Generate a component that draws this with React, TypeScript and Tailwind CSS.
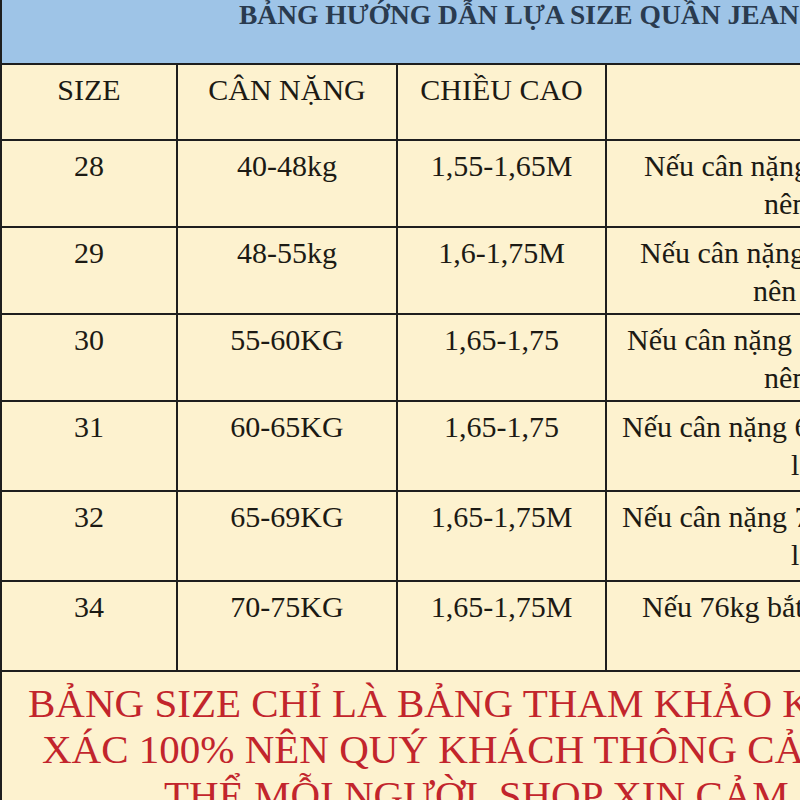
const rows = [
  { size: '28', weight: '40-48kg', height: '1,55-1,65M', h: 'h-[87px]', note: [{ t: 'Nếu cân nặng 48kg', pl: 'pl-[37px]' }, { t: 'nên lấy size 29', pl: 'pl-[157px]' }] },
  { size: '29', weight: '48-55kg', height: '1,6-1,75M', h: 'h-[87px]', note: [{ t: 'Nếu cân nặng 55kg', pl: 'pl-[33px]' }, { t: 'nên lấy size 30', pl: 'pl-[146px]' }] },
  { size: '30', weight: '55-60KG', height: '1,65-1,75', h: 'h-[87px]', note: [{ t: 'Nếu cân nặng  60kg', pl: 'pl-[20px]' }, { t: 'nên lấy size 31', pl: 'pl-[157px]' }] },
  { size: '31', weight: '60-65KG', height: '1,65-1,75', h: 'h-[90px]', note: [{ t: 'Nếu cân nặng 65kg', pl: 'pl-[15px]' }, { t: 'là size 32', pl: 'pl-[184px]' }] },
  { size: '32', weight: '65-69KG', height: '1,65-1,75M', h: 'h-[90px]', note: [{ t: 'Nếu cân nặng 70kg', pl: 'pl-[15px]' }, { t: 'là size 34', pl: 'pl-[184px]' }] },
  { size: '34', weight: '70-75KG', height: '1,65-1,75M', h: 'h-[90px]', note: [{ t: 'Nếu 76kg bắt buộc size 36', pl: 'pl-[35px]' }] },
];

const serif = { fontFamily: '"Liberation Serif", "Times New Roman", serif' };

export default function App() {
  return (
    <div className="w-[800px] h-[800px] overflow-hidden bg-[#fdf2cf]" style={serif}>
      <div className="w-[1100px] border-l-2 border-[#1e1e1e] text-[#1c1a14]">
        {/* Title band */}
        <div className="h-[65px] bg-[#9ec4e7] border-b-2 border-[#1e1e1e]">
          <div className="pl-[237px] text-[27.5px] leading-[30px] font-bold text-[#2a3b4f] whitespace-nowrap">
            BẢNG HƯỚNG DẪN LỰA SIZE QUẦN JEAN
          </div>
        </div>

        {/* Header row */}
        <div className="flex h-[76px] border-b-2 border-[#1e1e1e] text-[30px] leading-[38px]">
          <div className="w-[176px] border-r-2 border-[#1e1e1e] pt-[6px] text-center">SIZE</div>
          <div className="w-[220px] border-r-2 border-[#1e1e1e] pt-[6px] text-center">CÂN NẶNG</div>
          <div className="w-[209px] border-r-2 border-[#1e1e1e] pt-[6px] text-center">CHIỀU CAO</div>
          <div className="flex-1" />
        </div>

        {rows.map((r) => (
          <div key={r.size} className={`flex border-b-2 border-[#1e1e1e] text-[30px] leading-[38px] ${r.h}`}>
            <div className="w-[176px] border-r-2 border-[#1e1e1e] pt-[6px] text-center">{r.size}</div>
            <div className="w-[220px] border-r-2 border-[#1e1e1e] pt-[6px] text-center">{r.weight}</div>
            <div className="w-[209px] border-r-2 border-[#1e1e1e] pt-[6px] text-center">{r.height}</div>
            <div className="flex-1 pt-[6px] whitespace-pre">
              {r.note.map((n, i) => (
                <div key={i} className={n.pl}>{n.t}</div>
              ))}
            </div>
          </div>
        ))}

        {/* Disclaimer */}
        <div className="pt-[8px] text-[41px] leading-[46px] text-[#c2252c] whitespace-nowrap">
          <div className="pl-[26px]">BẢNG SIZE CHỈ LÀ BẢNG THAM KHẢO KHÔNG CHÍNH</div>
          <div className="pl-[40px]">XÁC 100% NÊN QUÝ KHÁCH THÔNG CẢM VÌ CƠ</div>
          <div className="pl-[162px]">THỂ MỖI NGƯỜI, SHOP XIN CẢM ƠN</div>
        </div>
      </div>
    </div>
  );
}
